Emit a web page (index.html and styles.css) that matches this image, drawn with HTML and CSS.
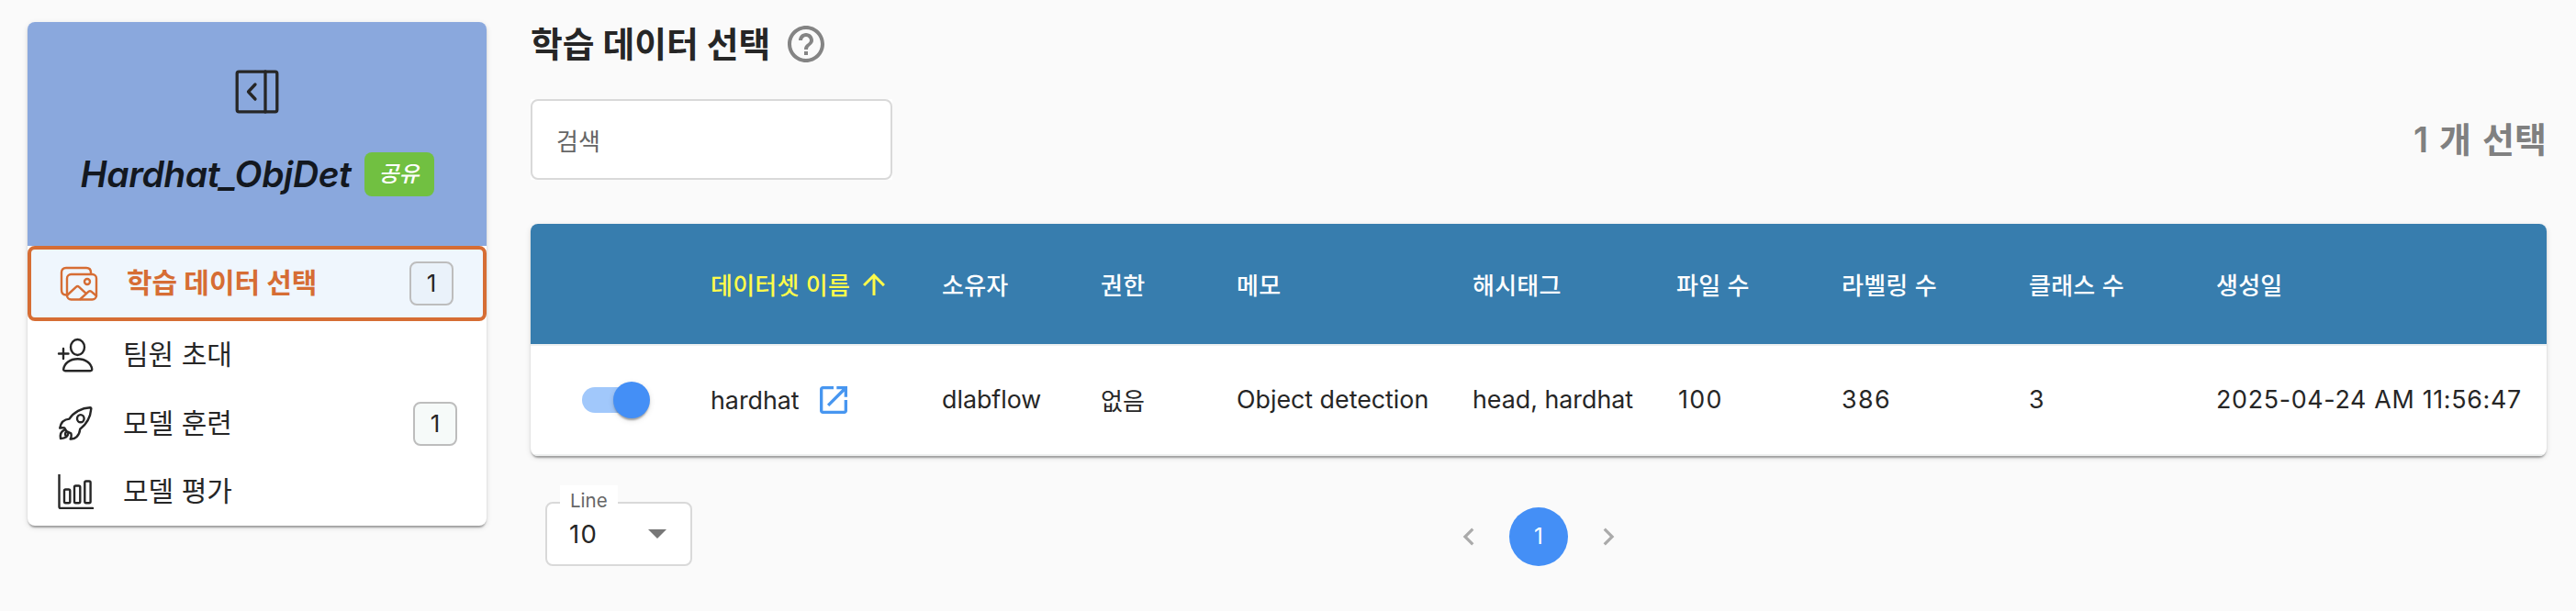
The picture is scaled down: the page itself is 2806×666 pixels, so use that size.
FILE: index.html
```html
<!DOCTYPE html>
<html lang="ko">
<head>
<meta charset="utf-8">
<title>학습 데이터 선택</title>
<link rel="stylesheet" href="styles.css">
</head>
<body>
<div class="page">
  <aside class="sidebar">
    <div class="project">
      <svg class="collapse" viewBox="0 0 48 48"><rect x="2.2" y="2.2" width="43.6" height="43.6" rx="2"/><path d="M33 2v44M22 16l-7.5 8 7.5 8"/></svg>
      <div class="project-name"><span class="name">Hardhat_ObjDet</span><span class="share">공유</span></div>
    </div>
    <nav class="menu">
      <div class="item active">
        <svg class="icon" viewBox="0 0 42 38"><path d="M7 31.500Q2 31.500 2 26V7q0-5 5-5h22q5 0 5 5v1.500"/><rect x="8" y="9" width="32" height="27.500" rx="4.500"/><circle cx="30" cy="17" r="3"/><path d="M8.500 31.500l9.300-8.700q1.700-1.500 3.400 0l7 6.500M22.500 36l9.200-8.300q1.300-1 2.600 0L40 32.500"/></svg>
        <span class="label">학습 데이터 선택</span><span class="count">1</span>
      </div>
      <div class="item">
        <svg class="icon" viewBox="0 0 42 38"><ellipse cx="23.500" cy="10.500" rx="7.500" ry="8.500"/><path d="M10 36.200q-2 0-1.800-1.800C9 28 15 23.300 23.700 23.300S38.500 28 39.200 34.400q.2 1.800-1.800 1.800zM3 17.500h10.500M8 12v11"/></svg>
        <span class="label">팀원 초대</span>
      </div>
      <div class="item">
        <svg class="icon" viewBox="0 0 42 38"><path d="M38.300 2.700q.3-1.400-1.200-1.500C28 1.500 19 6.500 14.500 13.600 8 14 5 19 4.200 23.600c1.500-.4 3.500-.5 5-.2l2.300 3.800 4.800 2.200q1 3-.6 6.200c5 .6 9.700-3.500 10.500-10.800C32.500 20 37.500 12 38.300 2.700z"/><ellipse cx="26.800" cy="13.200" rx="3.800" ry="4.100"/><path d="M9.200 25.600C5 27.500 4.200 30.500 5 35c3.500-.2 8-.5 8.200-5.200M11.500 27.500q-2 1.500-1.200 4"/></svg>
        <span class="label">모델 훈련</span><span class="count plain">1</span>
      </div>
      <div class="item">
        <svg class="icon" viewBox="0 0 42 38"><path d="M3.500 0v35.500q0 1.500 1.500 1.500h35"/><rect x="9" y="16.500" width="6.300" height="14.800" rx="1.500"/><rect x="20" y="12.500" width="6.300" height="18.800" rx="1.500"/><rect x="31.300" y="7.500" width="6.300" height="23.800" rx="1.500"/></svg>
        <span class="label">모델 평가</span>
      </div>
    </nav>
  </aside>
  <main class="main">
    <header class="heading">
      <h1>학습 데이터 선택</h1>
      <svg class="help" viewBox="0 0 24 24"><path d="M11 18h2v-2h-2v2zm1-16C6.480 2 2 6.480 2 12s4.480 10 10 10 10-4.480 10-10S17.520 2 12 2zm0 18c-4.410 0-8-3.590-8-8s3.590-8 8-8 8 3.590 8 8-3.590 8-8 8zm0-14c-2.210 0-4 1.790-4 4h2c0-1.100.9-2 2-2s2 .9 2 2c0 2-3 1.750-3 5h2c0-2.250 3-2.500 3-5 0-2.210-1.790-4-4-4z"/></svg>
    </header>
    <div class="toolbar">
      <div class="search-wrap"><div class="search">검색</div></div>
      <div class="selected">1 개 선택</div>
    </div>
    <section class="table">
      <div class="row head">
        <span></span>
        <span class="sorted">데이터셋 이름<svg class="arrow" viewBox="0 0 24 24"><path d="M4 12l1.410 1.410L11 7.830V20h2V7.830l5.580 5.590L20 12l-8-8-8 8z"/></svg></span>
        <span>소유자</span><span>권한</span><span>메모</span><span>해시태그</span><span>파일 수</span><span>라벨링 수</span><span>클래스 수</span><span>생성일</span>
      </div>
      <div class="row body">
        <span class="toggle-cell"><i class="switch"><i class="thumb"></i></i></span>
        <span class="dataset">hardhat<svg class="open" viewBox="0 0 24 24"><path d="M19 19H5V5h7V3H5c-1.110 0-2 .9-2 2v14c0 1.100.89 2 2 2h14c1.100 0 2-.9 2-2v-7h-2v7zM14 3v2h3.590l-9.830 9.830 1.410 1.410L19 6.410V10h2V3h-7z"/></svg></span>
        <span class="cell">dlabflow</span><span class="cell ko">없음</span><span class="cell">Object detection</span><span class="cell">head, hardhat</span><span class="cell num files">100</span><span class="cell num">386</span><span class="cell num">3</span><span class="cell date">2025-04-24 AM 11:56:47</span>
      </div>
    </section>
    <footer class="footer">
      <div class="select"><span class="legend">Line</span><span class="value">10</span><i class="caret"></i></div>
      <div class="pager">
        <svg class="chev" viewBox="0 0 24 24"><path d="M15.410 7.410L14 6l-6 6 6 6 1.410-1.410L10.830 12z"/></svg>
        <span class="current">1</span>
        <svg class="chev" viewBox="0 0 24 24"><path d="M10 6L8.590 7.410 13.170 12l-4.580 4.590L10 18l6-6z"/></svg>
      </div>
    </footer>
  </main>
</div>
</body>
</html>
```

FILE: styles.css
```css
* { box-sizing: border-box; }
body {
  margin: 0;
  background: #fafafa;
  color: #262626;
  font-family: Inter, "Noto Sans CJK KR", sans-serif;
  font-size: 26px;
}
.page { display: flex; align-items: flex-start; gap: 48px; height: 666px; padding: 24px 32px 0 30px; overflow: hidden; }

.sidebar, .table {
  background: #fff;
  border-radius: 8px;
  box-shadow: 0 4px 2px -2px rgba(0,0,0,.2), 0 2px 2px rgba(0,0,0,.14), 0 2px 6px rgba(0,0,0,.12);
}
.sidebar { width: 500px; height: 549px; overflow: hidden; flex: none; }
.project { height: 244px; padding-top: 52px; background: #8aa8dd; display: flex; flex-direction: column; align-items: center; }
.collapse { width: 48px; height: 48px; fill: none; stroke: #262626; stroke-width: 3.3; stroke-linecap: round; stroke-linejoin: round; }
.project-name { display: flex; align-items: center; gap: 14px; margin-top: 42px; height: 48px; font-style: italic; }
.name { font-size: 39px; font-weight: 600; letter-spacing: -.4px; color: #131820; line-height: 48px; white-space: nowrap; }
.share { width: 76px; height: 48px; border-radius: 8px; background: #71c041; color: #fff; font-size: 24px; font-weight: 500; line-height: 48px; text-align: center; }

.menu { display: flex; flex-direction: column; }
.item { display: flex; align-items: center; height: 74.600px; padding: 0 32px 0 31px; }
.item.active { height: 82px; padding: 0 32px 0 31px; border: 4px solid #d66d34; border-radius: 8px; background: #eff6fd; color: #d66d34; }
.icon { width: 42px; height: 38px; fill: none; stroke: currentColor; stroke-width: 2.4; stroke-linecap: round; stroke-linejoin: round; flex: none; }
.label { flex: 1; margin-left: 31px; padding-bottom: 2px; font-size: 30px; line-height: 40px; white-space: nowrap; }
.active .label { font-weight: 700; }
.count { width: 48px; height: 48px; border: 2px solid #bdbdbd; border-radius: 8px; background: #eaf2fa; color: #262626; font-size: 26px; line-height: 44px; text-align: center; }
.count.plain { background: #f6faf9; }

.main { flex: 1; min-width: 0; }
.heading { display: flex; align-items: center; gap: 15px; height: 48px; }
h1 { margin: 0; font-size: 37.800px; font-weight: 700; line-height: 48px; }
.help { width: 48px; height: 48px; fill: #848484; }
.toolbar { display: flex; justify-content: space-between; align-items: center; margin-top: 36px; height: 88px; }
.search-wrap { background: #fff; }
.search { width: 394px; height: 88px; border: 2px solid #d9d9d9; border-radius: 8px; padding: 3px 26px 0; color: #666; line-height: 84px; }
.selected { color: #808080; font-size: 38px; font-weight: 600; word-spacing: 2.500px; line-height: 48px; }

.table { margin-top: 48px; overflow: hidden; }
.row { display: grid; grid-template-columns: 196px 252px 173px 148px 257px 222px 180px 204px 204px 1fr; align-items: center; white-space: nowrap; border-bottom: 2px solid #eef0f0; }
.head { height: 133px; background: #377dae; background-clip: padding-box; color: #fff; font-weight: 500; letter-spacing: .25px; }
.body { height: 120px; font-size: 26.800px; }
.cell { padding-bottom: 2px; }
.ko { font-size: 26px; }
.num { letter-spacing: 1.400px; }
.files { padding-left: 2px; }
.date { letter-spacing: .7px; }
.sorted { display: flex; align-items: center; color: #fffb4a; }
.arrow { width: 36px; height: 36px; margin-left: 8px; fill: currentColor; }
.dataset { display: flex; align-items: center; }
.open { width: 40px; height: 40px; margin-left: 17px; fill: #4796f0; }
.toggle-cell { padding-left: 56px; }
.switch { display: flex; align-items: center; width: 68px; height: 28px; border-radius: 14px; background: #a1c8fb; }
.thumb { flex: none; width: 40px; height: 40px; margin-left: 34px; border-radius: 50%; background: #448ff6; box-shadow: 0 4px 2px -2px rgba(0,0,0,.2), 0 2px 2px rgba(0,0,0,.14), 0 2px 6px rgba(0,0,0,.12); }

.footer { display: grid; grid-template-columns: 1fr auto 1fr; align-items: center; margin-top: 50px; padding: 0 16px; height: 70px; }
.select { position: relative; display: flex; align-items: center; justify-content: space-between; width: 160px; height: 70px; padding: 0 26px 0 24px; border: 2px solid #d9d9d9; border-radius: 8px; background: #fff; }
.legend { position: absolute; left: 14px; top: -20px; width: 63px; height: 22px; padding-left: 11px; background: #fff; color: #666; font-size: 20.500px; line-height: 33px; }
.value { font-size: 27.500px; letter-spacing: 1.200px; }
.caret { border: 10px solid transparent; border-top-color: #777; border-bottom: 0; }
.pager { display: flex; align-items: center; gap: 25px; padding-top: 6px; }
.chev { width: 38px; height: 38px; fill: #aaa; }
.current { width: 64px; height: 64px; border-radius: 50%; background: #448ff6; color: #fff; font-size: 24px; line-height: 64px; text-align: center; }
```
